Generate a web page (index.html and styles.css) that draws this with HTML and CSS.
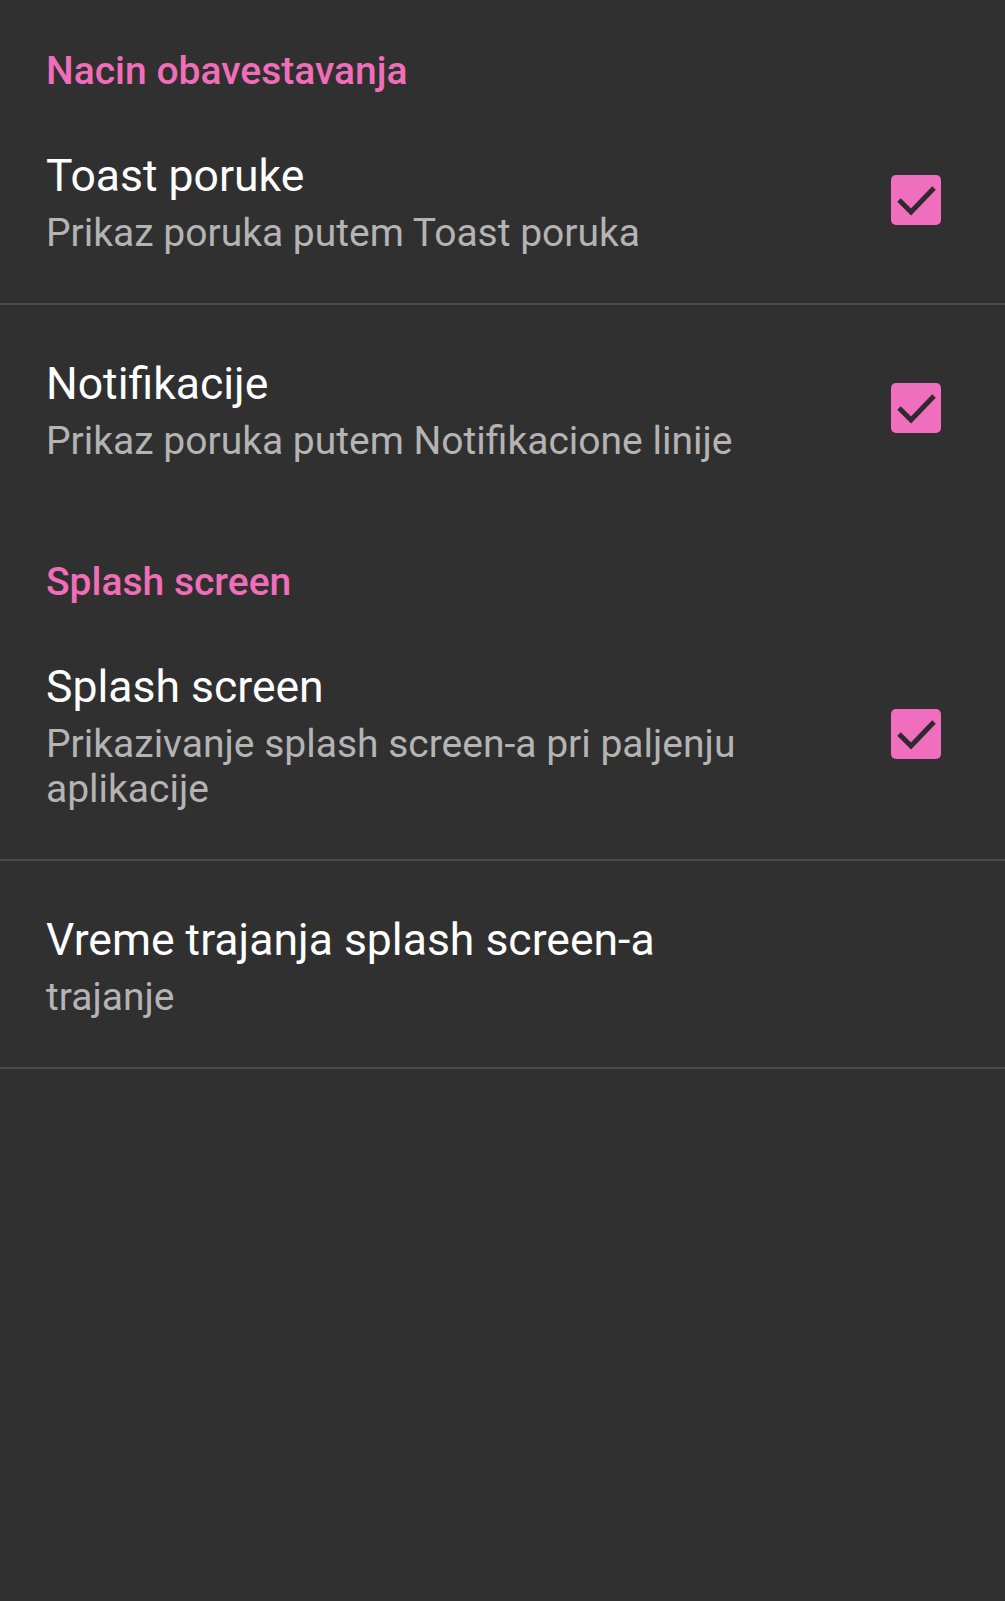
FILE: index.html
```html
<!DOCTYPE html>
<html lang="sr">
<head>
<meta charset="utf-8">
<title>Podesavanja</title>
<link rel="stylesheet" href="styles.css">
</head>
<body>
<main class="prefs">
  <h2 class="category">Nacin obavestavanja</h2>

  <div class="pref">
    <div class="pref-text">
      <div class="pref-title">Toast poruke</div>
      <div class="pref-summary">Prikaz poruka putem Toast poruka</div>
    </div>
    <span class="checkbox checked">
      <svg viewBox="0 0 50 50" width="50" height="50"><polyline points="8,25 20,37 43,13" /></svg>
    </span>
  </div>
  <div class="divider"></div>

  <div class="pref">
    <div class="pref-text">
      <div class="pref-title">Notifikacije</div>
      <div class="pref-summary">Prikaz poruka putem Notifikacione linije</div>
    </div>
    <span class="checkbox checked">
      <svg viewBox="0 0 50 50" width="50" height="50"><polyline points="8,25 20,37 43,13" /></svg>
    </span>
  </div>

  <h2 class="category">Splash screen</h2>

  <div class="pref">
    <div class="pref-text">
      <div class="pref-title">Splash screen</div>
      <div class="pref-summary">Prikazivanje splash screen-a pri paljenju aplikacije</div>
    </div>
    <span class="checkbox checked">
      <svg viewBox="0 0 50 50" width="50" height="50"><polyline points="8,25 20,37 43,13" /></svg>
    </span>
  </div>
  <div class="divider"></div>

  <div class="pref">
    <div class="pref-text">
      <div class="pref-title">Vreme trajanja splash screen-a</div>
      <div class="pref-summary">trajanje</div>
    </div>
  </div>
  <div class="divider"></div>
</main>
</body>
</html>
```
FILE: styles.css
```css
html, body {
  margin: 0;
  padding: 0;
  background: #303030;
}
body {
  min-height: 1601px;
  font-family: Roboto, "Noto Sans", "Liberation Sans", sans-serif;
}
.prefs {
  display: flex;
  flex-direction: column;
}
.category {
  margin: 0;
  padding: 51px 46px 6px 46px;
  font-size: 39px;
  line-height: 40px;
  font-weight: 500;
  color: #f06eb8;
}
.pref {
  display: flex;
  align-items: center;
  padding: 53px 0 47px 46px;
}
.pref-text {
  flex: 1;
  min-width: 0;
  padding-right: 40px;
}
.pref-title {
  font-size: 44.5px;
  line-height: 52px;
  color: #ffffff;
}
.pref-summary {
  margin-top: 9px;
  font-size: 39px;
  line-height: 45px;
  color: #b4b4b4;
}
.checkbox {
  flex: none;
  width: 50px;
  height: 50px;
  margin-right: 64px;
  margin-bottom: 6px;
  border-radius: 5px;
  background: #f06ebe;
  display: flex;
}
.checkbox svg polyline {
  fill: none;
  stroke: #2f2a2e;
  stroke-width: 5;
  stroke-linecap: butt;
  stroke-linejoin: miter;
}
.divider {
  height: 2px;
  background: #4a4a4a;
}
```
